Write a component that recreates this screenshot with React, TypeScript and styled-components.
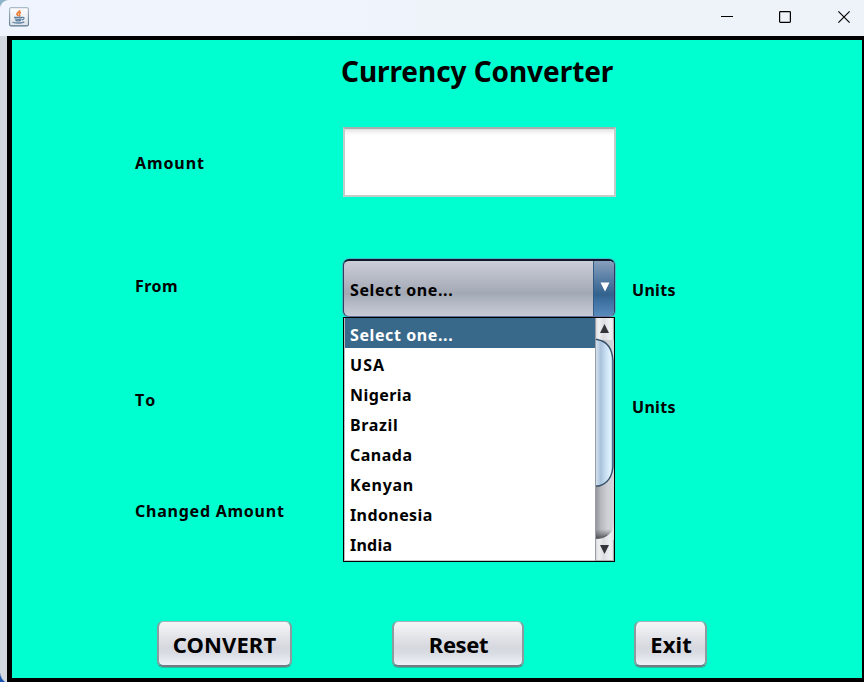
import React from "react";
import styled, { createGlobalStyle } from "styled-components";

const GlobalStyle = createGlobalStyle`
  *, *::before, *::after { box-sizing: border-box; }
  body { margin: 0; overflow: hidden; background: #8db4c8; }
  button { margin: 0; font: inherit; color: inherit; }
`;

const Window = styled.div`
  display: flex;
  flex-direction: column;
  width: 864px;
  height: 682px;
  overflow: hidden;
  border-radius: 9px 0 0 0;
  background: #d4d8e0;
  color: #000;
  font-family: "Noto Sans", "Open Sans", sans-serif;
  font-weight: 700;
`;

const TitleBar = styled.header`
  display: flex;
  flex: none;
  height: 36px;
  padding-left: 9px;
  background: linear-gradient(90deg, #f0f4fe 0%, #eff3fb 46%, #edf3f8 52%, #edf3f8 100%);
`;

const AppIcon = styled.svg`
  width: 20px;
  height: 20px;
  margin-top: 7px;
`;

const Controls = styled.div`
  display: flex;
  margin-left: auto;
  margin-right: -9px;
`;

const ControlButton = styled.button`
  display: grid;
  place-items: center;
  width: 58.5px;
  height: 34px;
  padding: 0;
  border: 0;
  background: transparent;
`;

const Body = styled.div`
  display: flex;
  flex: 1;
  min-height: 0;
`;

const Edge = styled.svg`
  flex: none;
  align-self: flex-end;
  width: 7px;
  height: 10px;
`;

const Panel = styled.main`
  display: flex;
  flex: 1;
  flex-direction: column;
  border: solid #000;
  border-width: 4px 2px 4px 5px;
  background: #00ffd0;
`;

const Heading = styled.h1<{ $spacing: number }>`
  height: 87px;
  margin: 0;
  padding: 12px 0 0 329px;
  font-size: 28px;
  line-height: 38px;
  letter-spacing: ${(p) => p.$spacing}px;
  white-space: nowrap;
`;

const Form = styled.div`
  display: grid;
  grid-template-columns: 208px 272px auto;
  grid-template-rows: 132px 114px 114px 133px;
  align-items: start;
  justify-content: start;
  padding-left: 123px;
`;

const Label = styled.span<{ $drop: number; $spacing: number; $column?: number }>`
  grid-column: ${(p) => p.$column ?? 1};
  padding-top: ${(p) => p.$drop}px;
  padding-left: ${(p) => (p.$column === 3 ? 17 : 0)}px;
  font-size: 16px;
  line-height: 20px;
  letter-spacing: ${(p) => p.$spacing}px;
  white-space: nowrap;
`;

const AmountInput = styled.input`
  width: 273px;
  height: 70px;
  padding: 0 8px;
  border: solid #c4cccb;
  border-width: 2px;
  border-top-color: #a8b0af;
  outline: 0;
  background: linear-gradient(#dcdcdc 0, #eee 2px, #f7f7f7 4px, #fff 7px);
  font: inherit;
  font-size: 16px;
`;

const ComboWrap = styled.div`
  position: relative;
  height: 58px;
`;

const Combo = styled.div`
  display: flex;
  height: 58px;
  overflow: hidden;
  border: 1px solid #303a59;
  border-top: 2px solid #101830;
  border-bottom-color: #61719b;
  border-radius: 6px;
  box-shadow: 0 0 0 1px #3ebfc8;
  background: linear-gradient(#cbced7 0%, #b7bbc6 30%, #a3a8b5 59%, #adb2bf 68%, #c8cbd6 100%);
`;

const ComboText = styled.span`
  flex: 1;
  padding: 19px 0 0 6px;
  font-size: 16px;
  line-height: 20px;
  letter-spacing: 0.6px;
`;

const ComboArrow = styled.span`
  width: 21px;
  padding: 20px 0 0 6px;
  border-left: 1px solid #355c84;
  background: linear-gradient(#879fbb 0%, #557ba3 35%, #33628e 61%, #4072a4 75%, #598abc 100%);
  svg { display: block; }
`;

const Popup = styled.div`
  position: absolute;
  z-index: 2;
  top: 58px;
  left: 0;
  display: flex;
  width: 272px;
  height: 245px;
  overflow: hidden;
  border: 1px solid #000;
  background: #fff;
`;

const OptionList = styled.ul`
  flex: 1;
  margin: 0;
  padding: 0;
  overflow: hidden;
  border-left: 1px solid #b8bcc0;
  border-bottom: 1px solid #c4c7cc;
  list-style: none;
`;

const Option = styled.li<{ $selected?: boolean; $spacing: number }>`
  height: 30px;
  padding: 4px 0 0 5px;
  background: ${(p) => (p.$selected ? "#39698a" : "transparent")};
  color: ${(p) => (p.$selected ? "#fff" : "#000")};
  font-size: 16px;
  line-height: 26px;
  letter-spacing: ${(p) => p.$spacing}px;
`;

const ScrollBar = styled.svg`
  flex: none;
  width: 19px;
  height: 243px;
`;

const Actions = styled.div`
  display: flex;
  padding: 1px 0 0 145px;
`;

const ActionButton = styled.button<{ $width: number; $gap?: number; $spacing: number; $shift?: number }>`
  width: ${(p) => p.$width}px;
  height: 46px;
  margin-left: ${(p) => p.$gap ?? 0}px;
  padding: 0 0 0 ${(p) => p.$shift ?? 0}px;
  border: 2px solid #8c9b9e;
  border-top: 1px solid #a7b0b3;
  border-bottom-color: #747b84;
  border-radius: 6px;
  box-shadow: 0 1px 0 #25bfa5;
  background: linear-gradient(#f6f6f8 0%, #e3e4e9 35%, #d6d8df 60%, #dadce3 73%, #eff1f8 100%) padding-box;
  font-size: 22px;
  line-height: 30px;
  letter-spacing: ${(p) => p.$spacing}px;
`;

const OPTIONS = [
  { name: "Select one...", spacing: 0.6 },
  { name: "USA", spacing: 1.1 },
  { name: "Nigeria", spacing: 0.42 },
  { name: "Brazil", spacing: 0.65 },
  { name: "Canada", spacing: 0.5 },
  { name: "Kenyan", spacing: 0.7 },
  { name: "Indonesia", spacing: 0.4 },
  { name: "India", spacing: 0.25 },
];

function JavaIcon() {
  return (
    <AppIcon viewBox="0 0 20 20" fill="none">
      <defs>
        <linearGradient id="tile" x1="0" y1="0" x2="0" y2="1">
          <stop offset="0" stopColor="#fff" />
          <stop offset="1" stopColor="#dfe3e7" />
        </linearGradient>
        <linearGradient id="tileEdge" x1="0" y1="0" x2="0" y2="1">
          <stop offset="0" stopColor="#a9bac9" />
          <stop offset="1" stopColor="#55758f" />
        </linearGradient>
      </defs>
      <rect x="0.6" y="0.6" width="18.8" height="18.3" rx="1.5" fill="url(#tile)" stroke="url(#tileEdge)" strokeWidth="1.1" />
      <path d="M10.600 3c.8 1.700-2.900 2.500-2.700 4.200.1.900 1.300 1.200 1.200 2.100M12 5.300c-1.600.8-2.200 1.500-1.500 2.400.5.700.1 1.200-.4 1.600" stroke="#ea7d33" strokeWidth="1.600" />
      <path d="M5 10.300h8.300M5.700 11.800c2 .6 4.900.6 7 0M6.400 13.400c1.700.6 4 .6 5.700 0M13.300 10.500c2.400-.8 2.300 1.900-.3 2.400" stroke="#5c82a4" strokeWidth="1.200" />
      <path d="M4 14.800c-1.200 1.500 9.500 1.700 11.200-.1" stroke="#6287a8" strokeWidth="1.300" />
    </AppIcon>
  );
}

function PopupScrollBar() {
  return (
    <ScrollBar viewBox="0 0 19 243">
      <defs>
        <linearGradient id="track" x1="0" x2="1" y1="0" y2="0">
          <stop offset="0" stopColor="#8e9096" />
          <stop offset="0.3" stopColor="#b5b7bd" />
          <stop offset="0.65" stopColor="#cfd0d6" />
          <stop offset="1" stopColor="#d4d6dc" />
        </linearGradient>
        <linearGradient id="trackEnd" x1="0" x2="0" y1="0" y2="1">
          <stop offset="0.2" stopColor="#55585d" stopOpacity="0" />
          <stop offset="1" stopColor="#404347" stopOpacity="0.8" />
        </linearGradient>
        <linearGradient id="thumb" x1="0" x2="1" y1="0" y2="0">
          <stop offset="0" stopColor="#d8e6f2" />
          <stop offset="0.12" stopColor="#c9d9e8" />
          <stop offset="0.32" stopColor="#a9c2db" />
          <stop offset="0.6" stopColor="#c8e0f3" />
          <stop offset="0.85" stopColor="#e0f2fd" />
          <stop offset="1" stopColor="#9cb9d1" />
        </linearGradient>
        <linearGradient id="button" x1="0" x2="1" y1="0" y2="0">
          <stop offset="0" stopColor="#d1d2d6" />
          <stop offset="0.2" stopColor="#f0f0f2" />
          <stop offset="0.45" stopColor="#dcdde0" />
          <stop offset="0.8" stopColor="#eff0f1" />
          <stop offset="1" stopColor="#dedfe2" />
        </linearGradient>
      </defs>
      <rect width="19" height="243" fill="url(#button)" />
      <path d="M0 22H19V207Q16 220 5 220H0Z" fill="url(#track)" />
      <path d="M0 209H18.400Q14 220 5 220H0Z" fill="url(#trackEnd)" />
      <path d="M0 220.500H3Q8 220.500 12 217" fill="none" stroke="#55595f" strokeWidth="0.900" />
      <path d="M0 21.500H2Q17 24 18 43V148Q17 164 4 168H0Z" fill="url(#thumb)" />
      <path d="M0 21.500H2Q17 24 18 43V148Q17 164 4 168H0" fill="none" stroke="#344f68" strokeWidth="1.400" />
      <path d="M9.500 6 14 15H5Z" fill="#333539" />
      <path d="M5 227H14L9.500 236Z" fill="#333539" />
      <path d="M.5 0V243" stroke="#9a9da3" />
      <path d="M1 242.500H19M18.500 222V243M18.500 0V22" stroke="#aaaeb2" />
    </ScrollBar>
  );
}

export default function App() {
  return (
    <>
      <GlobalStyle />
      <Window>
        <TitleBar>
          <JavaIcon />
          <Controls>
            <ControlButton aria-label="Minimize">
              <svg width="12" height="12"><path d="M0 5.500H12" stroke="#000" /></svg>
            </ControlButton>
            <ControlButton aria-label="Maximize">
              <svg width="12" height="12"><rect x=".6" y=".6" width="10.800" height="10.800" rx=".8" fill="none" stroke="#000" strokeWidth="1.200" /></svg>
            </ControlButton>
            <ControlButton aria-label="Close">
              <svg width="12" height="12"><path d="M.4.4 11.600 11.600M11.600.4.4 11.600" stroke="#000" strokeWidth="1.150" /></svg>
            </ControlButton>
          </Controls>
        </TitleBar>
        <Body>
          <Edge viewBox="0 0 7 10">
            <path d="M0 1Q1 7 5 10H0Z" fill="#1754b0" />
            <path d="M0 1Q1 7 5 10" fill="none" stroke="#8ea9cf" strokeWidth="0.700" />
          </Edge>
          <Panel>
            <Heading $spacing={-0.07}>Currency Converter</Heading>
            <Form>
              <Label $drop={26} $spacing={0.9}>Amount</Label>
              <AmountInput aria-label="Amount" />

              <Label $drop={17} $spacing={0.5}>From</Label>
              <ComboWrap>
                <Combo>
                  <ComboText>Select one...</ComboText>
                  <ComboArrow>
                    <svg width="10" height="12"><path d="M.5 1.500H9.500L5 10.500Z" fill="#fff" /></svg>
                  </ComboArrow>
                </Combo>
                <Popup>
                  <OptionList>
                    {OPTIONS.map((option, index) => (
                      <Option key={option.name} $selected={index === 0} $spacing={option.spacing}>
                        {option.name}
                      </Option>
                    ))}
                  </OptionList>
                  <PopupScrollBar />
                </Popup>
              </ComboWrap>
              <Label $column={3} $drop={21} $spacing={0.3}>Units</Label>

              <Label $drop={17} $spacing={2.2}>To</Label>
              <Label $column={3} $drop={24} $spacing={0.3}>Units</Label>

              <Label $drop={14} $spacing={0.76}>Changed Amount</Label>
            </Form>
            <Actions>
              <ActionButton $width={135} $spacing={0.1}>CONVERT</ActionButton>
              <ActionButton $width={132} $gap={100} $spacing={-0.4} $shift={1}>Reset</ActionButton>
              <ActionButton $width={73} $gap={110} $spacing={0.1} $shift={1}>Exit</ActionButton>
            </Actions>
          </Panel>
        </Body>
      </Window>
    </>
  );
}
